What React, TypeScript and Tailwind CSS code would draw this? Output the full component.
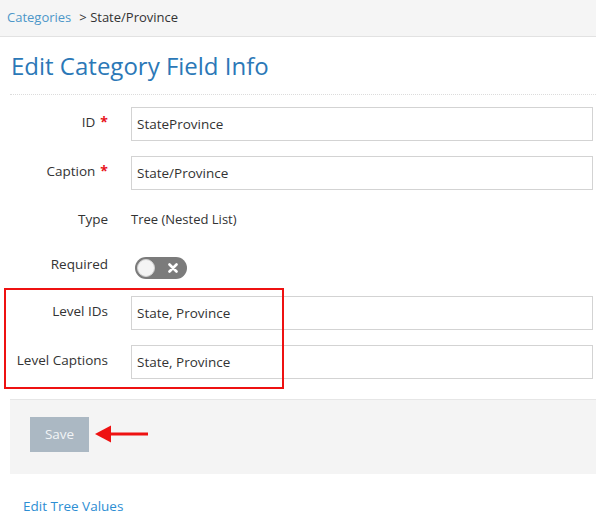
import React from 'react';

const font = { fontFamily: '"Open Sans", "Noto Sans", sans-serif' };

function Toggle() {
  return (
    <div className="relative mt-[3px] h-[22px] w-[52px] rounded-full bg-[#7b7b7b]">
      <div className="absolute left-[2px] top-[2px] h-[18px] w-[18px] rounded-full border border-[#d0d0d0] bg-[#f4f4f4]" />
      <svg className="absolute right-[9px] top-[6px]" width="10" height="10" viewBox="0 0 10 10">
        <path d="M1.5 1.5 L8.5 8.5 M8.5 1.5 L1.5 8.5" stroke="#fff" strokeWidth="2.6" strokeLinecap="round" />
      </svg>
    </div>
  );
}

function Req() {
  return <span className="ml-[5px] text-[14px] font-bold text-[#e8121b]">*</span>;
}

function Field({ label, value, req }: { label: string; value: string; req?: boolean }) {
  return (
    <div className="flex items-start">
      <div className="w-[98px] shrink-0 pt-[5px] text-right text-[13.5px] leading-[20px] text-[#333]">
        {label}
        {req && <Req />}
      </div>
      <input
        readOnly
        value={value}
        className="ml-[23px] h-[34px] flex-1 border border-[#d3d3d3] bg-white px-[5px] text-[13.5px] text-[#333] outline-none"
        style={font}
      />
    </div>
  );
}

export default function App() {
  return (
    <div className="relative h-[528px] w-[596px] overflow-hidden bg-white" style={font}>
      <div className="flex h-[37px] items-center border-b border-[#e2e2e2] bg-[#f5f5f5] px-[7px] text-[13px]">
        <span className="text-[#4d97c9]">Categories</span>
        <span className="ml-[8px] text-[#333]">&gt; State/Province</span>
      </div>

      <div className="pl-[10px]">
        <h1 className="ml-[1px] mt-[12px] text-[24px] leading-[34px] text-[#2b78b7]">Edit Category Field Info</h1>
        <div className="mt-[11px] border-t border-dotted border-[#dcdcdc]" />

        <div className="pr-[3px] pt-[12px]">
          <Field label="ID" value="StateProvince" req />
          <div className="mt-[15px]">
            <Field label="Caption" value="State/Province" req />
          </div>
          <div className="mt-[19px] flex items-start text-[13.5px] leading-[20px] text-[#333]">
            <div className="w-[98px] shrink-0 text-right">Type</div>
            <div className="ml-[23px] text-[13px]">Tree (Nested List)</div>
          </div>
          <div className="mt-[25px] flex items-start text-[13.5px] leading-[20px] text-[#333]">
            <div className="w-[98px] shrink-0 text-right">Required</div>
            <div className="ml-[27px]">
              <Toggle />
            </div>
          </div>
          <div className="mt-[17px]">
            <Field label="Level IDs" value="State, Province" />
          </div>
          <div className="mt-[15px]">
            <Field label="Level Captions" value="State, Province" />
          </div>
        </div>

        <div className="mt-[20px] flex h-[75px] items-start border-t border-[#e6e6e6] bg-[#f4f4f4] pl-[20px] pt-[17px]">
          <button className="h-[35px] w-[59px] bg-[#abb8c3] text-[13.5px] text-[#f2f4f6]" style={font}>
            Save
          </button>
          <svg className="ml-[6px] mt-[8px]" width="54" height="18" viewBox="0 0 54 18">
            <path d="M0 9 L16 0.5 L16 17.5 Z" fill="#ee1111" />
            <rect x="14" y="7.5" width="39" height="3" fill="#ee1111" />
          </svg>
        </div>

        <div className="mt-[22px] pl-[13px] text-[13.5px] text-[#2d8ed3]">Edit Tree Values</div>
      </div>

      <div className="pointer-events-none absolute left-[4px] top-[288px] h-[101px] w-[280px] border-2 border-[#ee1111]" />
    </div>
  );
}
